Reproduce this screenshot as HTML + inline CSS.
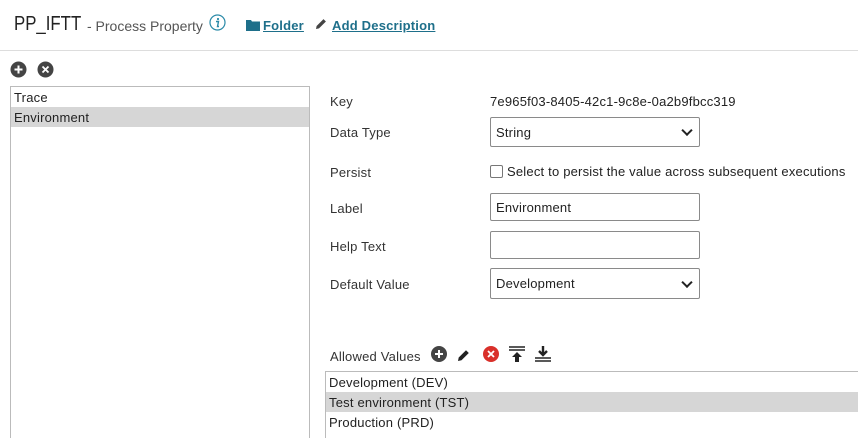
<!DOCTYPE html>
<html><head><meta charset="utf-8"><style>
*{box-sizing:border-box;margin:0;padding:0}
body{width:858px;height:438px;overflow:hidden;background:#fff;font-family:"Liberation Sans",sans-serif;font-size:13px;color:#333;position:relative;letter-spacing:0.2px}
.a{position:absolute;white-space:nowrap}
.lbl{left:330px;color:#333}
.inp{position:absolute;left:490px;width:210px;border:1px solid #8a8a8a;border-radius:2px;background:#fff;padding-left:5px;color:#222}
.sel:after{content:"";position:absolute;right:8px;top:50%;width:6px;height:6px;border-right:2px solid #222;border-bottom:2px solid #222;transform:translateY(-70%) rotate(45deg)}
.row{position:absolute;height:20px;line-height:21px;padding-left:3px;color:#222}
a{color:#1e6f8a;font-weight:bold;text-decoration:underline}
</style></head><body>
<div class="a" style="left:14px;top:13px;font-size:20px;color:#222;transform:scaleX(0.84);transform-origin:left;letter-spacing:0">PP_IFTT</div>
<div class="a" style="left:87px;top:18px;font-size:14px;color:#555;letter-spacing:0">- Process Property</div>
<svg class="a" style="left:209px;top:14px" width="17" height="17" viewBox="0 0 17 17"><circle cx="8.5" cy="8.5" r="7.5" fill="none" stroke="#2a8aa8" stroke-width="1.2"/><circle cx="9" cy="5" r="1.1" fill="#2a8aa8"/><path d="M7 7.5h2.5l-1 5h1.5" fill="none" stroke="#2a8aa8" stroke-width="1.4"/></svg>
<svg class="a" style="left:246px;top:19px" width="14" height="12" viewBox="0 0 14 12"><path d="M0 1h5l1 1.5h8V12H0z" fill="#1e6f8a"/></svg>
<a class="a" style="left:263px;top:18px">Folder</a>
<svg class="a" style="left:315px;top:18px" width="12" height="12" viewBox="0 0 12 12"><path d="M1 11l.6-3L8.5 1.1l2.4 2.4L4 10.4z" fill="#444"/></svg>
<a class="a" style="left:332px;top:18px">Add Description</a>
<div class="a" style="left:0;top:50px;width:858px;height:1px;background:#ddd"></div>
<svg class="a" style="left:10px;top:61px" width="60" height="17"><circle cx="8.5" cy="8.5" r="8" fill="#444"/><path d="M8.5 4.5v8M4.5 8.5h8" stroke="#fff" stroke-width="2"/><circle cx="35.5" cy="8.5" r="8" fill="#444"/><path d="M32.5 5.5l6 6M38.5 5.5l-6 6" stroke="#fff" stroke-width="1.8"/></svg>
<div class="a" style="left:10px;top:86px;width:300px;height:352px;border:1px solid #bbb;border-bottom:none"></div>
<div class="row" style="left:11px;top:87px;width:298px">Trace</div>
<div class="row" style="left:11px;top:107px;width:298px;background:#d6d6d6">Environment</div>
<div class="a lbl" style="top:94px">Key</div>
<div class="a" style="left:490px;top:94px;color:#222">7e965f03-8405-42c1-9c8e-0a2b9fbcc319</div>
<div class="a lbl" style="top:125px">Data Type</div>
<div class="inp sel" style="top:117px;height:30px;line-height:29px">String</div>
<div class="a lbl" style="top:165px">Persist</div>
<div class="a" style="left:490px;top:165px;width:13px;height:13px;border:1px solid #777;border-radius:2px"></div>
<div class="a" style="left:507px;top:164px;color:#222">Select to persist the value across subsequent executions</div>
<div class="a lbl" style="top:201px">Label</div>
<div class="inp" style="top:193px;height:28px;line-height:27px">Environment</div>
<div class="a lbl" style="top:239px">Help Text</div>
<div class="inp" style="top:231px;height:28px"></div>
<div class="a lbl" style="top:277px">Default Value</div>
<div class="inp sel" style="top:268px;height:31px;line-height:30px">Development</div>
<div class="a lbl" style="top:349px">Allowed Values</div>
<svg class="a" style="left:430px;top:345px" width="125" height="18"><circle cx="9" cy="9" r="8" fill="#444"/><path d="M9 5v8M5 9h8" stroke="#fff" stroke-width="2"/><path d="M28 16l.7-3.5L36 5.2l2.8 2.8L31.5 15.3z" fill="#222"/><circle cx="61" cy="9" r="8" fill="#d9302a"/><path d="M58 6l6 6M64 6l-6 6" stroke="#fff" stroke-width="1.8"/><path d="M79 2h16M79 5h16" stroke="#222" stroke-width="1.6"/><path d="M87 7l-5 5h3v5h4v-5h3z" fill="#222"/><path d="M113 1v8M109 6l4 4 4-4" stroke="#222" stroke-width="2.4" fill="none"/><path d="M105 13h16M105 16h16" stroke="#222" stroke-width="1.6"/></svg>
<div class="a" style="left:325px;top:371px;width:540px;height:67px;border:1px solid #bbb;border-bottom:none"></div>
<div class="row" style="left:326px;top:372px;width:532px">Development (DEV)</div>
<div class="row" style="left:326px;top:392px;width:532px;background:#d6d6d6">Test environment (TST)</div>
<div class="row" style="left:326px;top:412px;width:532px">Production (PRD)</div>
</body></html>
